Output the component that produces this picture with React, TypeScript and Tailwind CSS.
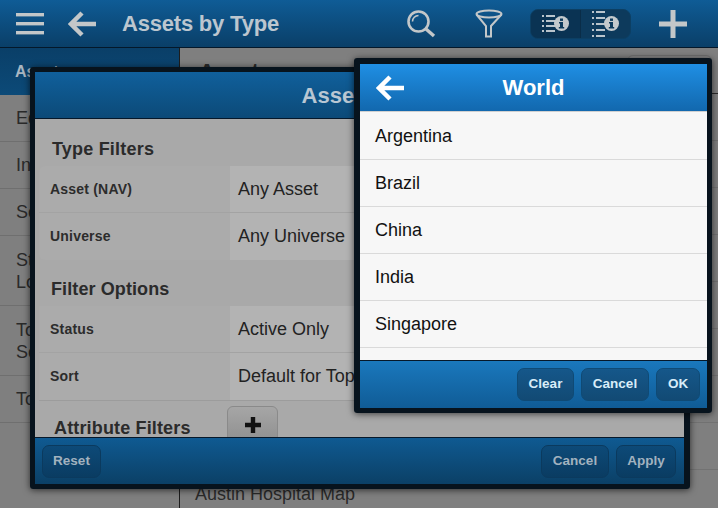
const font = { fontFamily: '"Liberation Sans", Arial, sans-serif' };

function Hamburger({ className }: { className: string }) {
    return (
        <svg width="28" height="24" viewBox="0 0 28 24" className={className}>
            <rect x="0" y="1" width="28" height="3.4" fill="currentColor" />
            <rect x="0" y="10" width="28" height="3.4" fill="currentColor" />
            <rect x="0" y="19" width="28" height="3.4" fill="currentColor" />
        </svg>
    );
}

function BackArrow({ className }: { className: string }) {
    return (
        <svg width="28" height="26" viewBox="0 0 28 26" className={className}>
            <path d="M28 13H4M14 2 3 13l11 11" fill="none" stroke="currentColor" strokeWidth="4.5" />
        </svg>
    );
}

function Search() {
    return (
        <svg width="30" height="30" viewBox="0 0 30 30" className="text-[#c3c7c9]">
            <circle cx="12.5" cy="12.5" r="10" fill="none" stroke="currentColor" strokeWidth="2.6" />
            <path d="M6.5 12.5a6 6 0 0 1 6-6" fill="none" stroke="currentColor" strokeWidth="1.6" />
            <path d="M20 20l8 7" fill="none" stroke="currentColor" strokeWidth="3.4" />
        </svg>
    );
}

function Funnel() {
    return (
        <svg width="28" height="29" viewBox="0 0 28 29" className="text-[#c3c7c9]">
            <ellipse cx="14" cy="5" rx="12.5" ry="3.6" fill="none" stroke="currentColor" strokeWidth="2" />
            <path d="M1.5 5.5 11 17v10.5h5V17l10.5-11.5" fill="none" stroke="currentColor" strokeWidth="2" />
        </svg>
    );
}

function ListInfo({ tall }: { tall?: boolean }) {
    const rows = tall ? [1, 7, 13, 19, 25] : [5, 10, 15, 20];
    return (
        <svg width="28" height="28" viewBox="0 0 28 28">
            {rows.map((y) => (
                <g key={y} fill="#b9c4cc">
                    <rect x="0" y={y} width="2" height="2" />
                    <rect x="4" y={y} width="9" height="2" />
                </g>
            ))}
            <circle cx="19.5" cy="13.5" r="7.5" fill="#c3c9cc" />
            <rect x="18" y="8.5" width="3" height="2.4" fill="#0d3a5c" />
            <path d="M17 12h4v5h1.2v1.6h-5.4V17H18v-3.4h-1z" fill="#0d3a5c" />
        </svg>
    );
}

function FooterButton({ label, width, dim }: { label: string; width: string; dim?: boolean }) {
    return (
        <button
            className={
                (dim
                    ? 'h-[33px] rounded-[7px] border border-[#0b3a5e] bg-gradient-to-b from-[#0d4a78] to-[#0a3c62] text-[#a2b2bf] text-[13.5px] font-bold '
                    : 'h-[33px] rounded-[7px] border border-[#0f4a75] bg-gradient-to-b from-[#15578a] to-[#124a74] text-[#d8ecf8] text-[13.5px] font-bold ') + width
            }
        >
            {label}
        </button>
    );
}

function FilterRow({ label, value, last }: { label: string; value: string; last?: boolean }) {
    return (
        <div className={last ? 'flex h-[47px] items-stretch' : 'flex h-[47px] items-stretch border-b border-[#a3a3a3]'}>
            <div className="w-[191px] flex items-center pl-[11px] bg-[#ababab] text-[14px] tracking-[0.2px] font-bold text-[#2c2c2c]">{label}</div>
            <div className="flex-1 flex items-center pl-[8px] bg-[#b3b3b3] text-[18px] text-[#222] whitespace-nowrap overflow-hidden">{value}</div>
        </div>
    );
}

export default function App() {
    const sideItems = [
        { label: 'Equity', tall: false },
        { label: 'Industry', tall: false },
        { label: 'Sector', tall: false },
        { label: 'State Local', tall: true },
        { label: 'Top Sector', tall: true },
        { label: 'Top', tall: false },
    ];
    const countries = ['Argentina', 'Brazil', 'China', 'India', 'Singapore'];
    const mainRows = ['', '', '', '', '', '', '', '', 'Austin Hospital Map'];

    return (
        <div className="relative w-[718px] h-[508px] overflow-hidden bg-[#7f7f7f]" style={font}>
            <header className="h-[48px] flex items-center border-b border-[#04182a] bg-gradient-to-b from-[#0f5c96] to-[#0a3f68]">
                <Hamburger className="ml-[16px] text-[#c3c7c9]" />
                <BackArrow className="ml-[24px] text-[#c3c7c9]" />
                <div className="ml-[26px] text-[22px] tracking-[-0.2px] font-bold text-[#bcc6cf]">Assets by Type</div>
                <div className="ml-auto flex items-center">
                    <Search />
                    <div className="ml-[39px]"><Funnel /></div>
                    <div className="ml-[27px] flex h-[30px] w-[101px] rounded-[8px] overflow-hidden border border-[#0c3f63] bg-[#0d3a5c]">
                        <div className="flex-1 flex items-center justify-center bg-[#0a3353] border-r border-[#0a2d48]"><ListInfo /></div>
                        <div className="flex-1 flex items-center justify-center"><ListInfo tall /></div>
                    </div>
                    <div className="ml-[28px] mr-[31px] text-[#c3c7c9]">
                        <svg width="28" height="28" viewBox="0 0 28 28"><path d="M14 0v28M0 14h28" stroke="currentColor" strokeWidth="5" /></svg>
                    </div>
                </div>
            </header>

            <div className="flex h-[460px]">
                <aside className="w-[180px] border-r border-[#1d1d1d] text-[18px] text-[#2a2a2a]">
                    <div className="h-[47px] pl-[15px] flex items-center bg-gradient-to-b from-[#0a3f68] to-[#0c4a78] text-[#a9b6c1] font-bold text-[16px]">Assets</div>
                    {sideItems.map((item) => (
                        <div
                            key={item.label}
                            className={item.tall ? 'h-[70px] pl-[16px] pr-[100px] leading-[22px] flex items-center border-b border-[#6f6f6f]' : 'h-[47px] pl-[16px] flex items-center border-b border-[#6f6f6f]'}
                        >
                            {item.label}
                        </div>
                    ))}
                </aside>
                <main className="flex-1 flex flex-col overflow-hidden text-[18px] text-[#2a2a2a]">
                    <div className="h-[46px] shrink-0 flex items-start justify-between pl-[19px] pr-[6px] pt-[7px] border-b border-[#2a2a2a]">
                        <div className="text-[22px] font-bold">Assets</div>
                        <button className="w-[85px] h-[33px] rounded-[6px] border border-[#707070] bg-[#858585]" />
                    </div>
                    {mainRows.map((label, i) => (
                        <div key={i} className="h-[47px] shrink-0 pl-[15px] pt-[3px] flex items-center border-b border-[#727272]">{label}</div>
                    ))}
                </main>
            </div>

            <section className="absolute left-[30px] top-[67px] w-[660px] h-[422px] flex flex-col border-[5px] border-r-[6px] border-[#07131d] rounded-[3px] shadow-[0_1px_7px_rgba(0,0,0,0.65)]">
                <div className="h-[47px] shrink-0 flex items-center justify-center pl-[4px] border-b border-[#06182a] bg-gradient-to-b from-[#10609c] to-[#0c4a78] text-[22px] font-bold text-[#b9c7d3]">Asset Filter</div>
                <div className="flex-1 overflow-hidden bg-[#a9a9a9] pl-[4px] border-b border-[#06182a]">
                    <div className="pt-[20px] pl-[13px] text-[18px] tracking-[0.2px] leading-[21px] font-bold text-[#2b2b2b]">Type Filters</div>
                    <div className="mt-[6px] rounded-l-[6px] overflow-hidden">
                        <FilterRow label="Asset (NAV)" value="Any Asset" />
                        <FilterRow label="Universe" value="Any Universe" last />
                    </div>
                    <div className="pt-[19px] pl-[12px] text-[18px] tracking-[0.1px] leading-[21px] font-bold text-[#2b2b2b]">Filter Options</div>
                    <div className="mt-[6px]">
                        <FilterRow label="Status" value="Active Only" />
                        <FilterRow label="Sort" value="Default for Top" last />
                    </div>
                    <div className="flex items-start border-t border-[#9c9c9c]">
                        <div className="w-[188px] pl-[15px] pt-[17px] text-[18px] tracking-[0.15px] leading-[21px] font-bold text-[#2b2b2b]">Attribute Filters</div>
                        <button className="mt-[5px] w-[51px] h-[38px] shrink-0 rounded-[6px] border border-[#8a8a8a] bg-gradient-to-b from-[#a6a6a6] to-[#8f8f8f] flex items-center justify-center">
                            <svg width="18" height="18" viewBox="0 0 18 18"><path d="M9 1v16M1 9h16" stroke="#111" strokeWidth="4.4" /></svg>
                        </button>
                    </div>
                </div>
                <div className="h-[46px] shrink-0 flex items-center gap-[7px] pl-[7px] pr-[8px] bg-gradient-to-b from-[#0f5a92] to-[#0b4066]">
                    <FooterButton label="Reset" width="w-[59px]" dim />
                    <div className="flex-1" />
                    <FooterButton label="Cancel" width="w-[68px]" dim />
                    <FooterButton label="Apply" width="w-[60px]" dim />
                </div>
            </section>

            <section className="absolute left-[354px] top-[58px] w-[358px] h-[355px] flex flex-col border-[5px] border-l-[6px] border-t-[6px] border-[#07131d] rounded-[3px] shadow-[0_1px_7px_rgba(0,0,0,0.65)]">
                <div className="relative h-[47px] shrink-0 flex items-center justify-center bg-gradient-to-b from-[#1f8fe4] to-[#1268ae] text-[22px] font-bold text-white">
                    <BackArrow className="absolute left-[16px] top-[11px] text-white" />
                    World
                </div>
                <div className="h-[249px] shrink-0 overflow-hidden bg-[#f7f7f7] border-t border-[#d0d0d0] pt-[1px] text-[18px] text-[#111]">
                    {countries.map((c) => (
                        <div key={c} className="h-[47px] pl-[15px] flex items-center border-b border-[#dadada]">{c}</div>
                    ))}
                </div>
                <div className="flex-1 flex items-center justify-end gap-[7px] pr-[7px] border-t border-[#06182a] bg-gradient-to-b from-[#1a78bd] to-[#105c96]">
                    <FooterButton label="Clear" width="w-[57px]" />
                    <FooterButton label="Cancel" width="w-[68px]" />
                    <FooterButton label="OK" width="w-[44px]" />
                </div>
            </section>
        </div>
    );
}
